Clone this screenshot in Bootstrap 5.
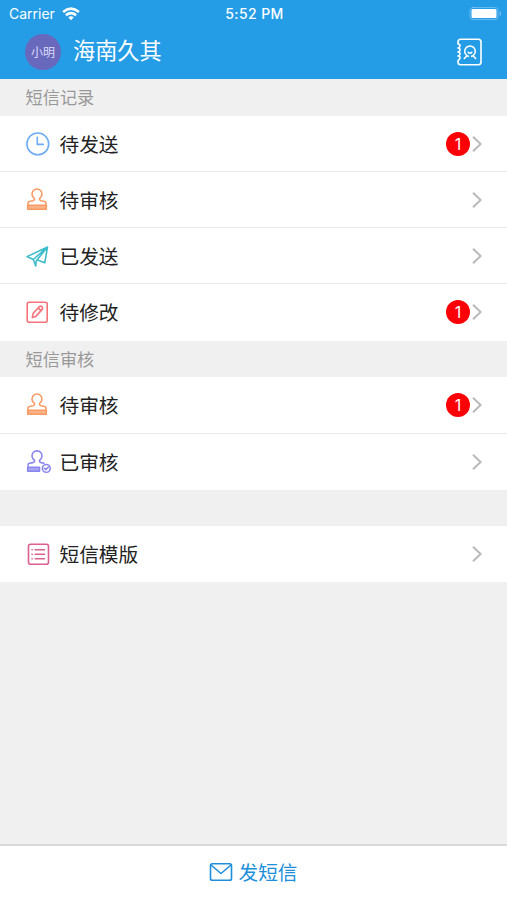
<!DOCTYPE html>
<html lang="zh-CN">
<head>
<meta charset="utf-8">
<meta name="viewport" content="width=device-width, initial-scale=1">
<title>短信</title>
<link href="https://cdn.jsdelivr.net/npm/bootstrap@5.3.0/dist/css/bootstrap.min.css" rel="stylesheet">
<style>
body{background:#f0f0f0;font-family:"Noto Sans CJK SC",sans-serif;color:#222;overflow:hidden}
svg{display:block;flex:none;fill:none;stroke:currentColor;stroke-width:1.6;stroke-linecap:round;stroke-linejoin:round}
.top-area{background:#249ce6;height:79px}
.status-line{height:28px;padding:0 5px 0 9px;font:14px/28px Inter,sans-serif}
.status-line>*{flex:1 1 0}
.carrier{letter-spacing:0}
.wifi{margin-left:7px;stroke-width:2.5;stroke-linecap:butt}
.clock-text{font-weight:500;font-size:14px;letter-spacing:.4px;margin-left:-2px}
.title-line{height:49px;padding:0 24px 1px 25px}
.avatar{width:36px;height:36px;background:#6868bd;font-size:12px;line-height:1;color:#dcdcf8}
.org{font-size:22.2px;line-height:30px;margin-left:12px;margin-top:-6px}
.section-label{height:37px;padding-left:25.5px;font-size:17.2px;line-height:36px;color:#999}
.section-label.section-short{line-height:35px}
.section-short{height:36px}
.menu-row{height:56px;padding:0 23px 0 24px;border:0;border-bottom:2px solid #eaeaea;border-radius:0!important;color:#222;background:#fff}
.menu-row.tall{height:57px;padding-bottom:1px}
.menu-row.last{border-bottom-color:#fff}
.menu-text{font-size:19.7px;line-height:28px;margin-left:7.5px}
.count{width:24px;height:24px;background:#fb0007;font:16px/24px Inter,sans-serif;color:#fff}
.chev{color:#b9b9b9;stroke-width:2;stroke-linecap:butt;stroke-linejoin:miter}
.c-clock{color:#6cabf6}.c-stamp{color:#f89a62}.c-plane{color:#3fbccb}.c-edit{color:#f5747c}.c-done{color:#8b86ef}.c-list{color:#dc5f91}
.send-bar{height:56px;padding:0 1px 2px 0;border-top:2px solid #d8d8d8;color:#208fdb;font-size:19.7px;line-height:28px}
</style>
<script src="https://cdn.jsdelivr.net/npm/bootstrap@5.3.0/dist/js/bootstrap.bundle.min.js"></script>
</head>
<body>
<svg width="0" height="0" class="position-absolute" aria-hidden="true">
  <symbol id="stamp" viewBox="0 0 28 28"><path d="M4 18.5V17.2Q4 15.8 5.5 15.5L9 14.8Q11.2 14 10.2 12.2A5 5 0 1 1 15.8 12.2Q14.8 14 17 14.8L20.5 15.5Q22 15.8 22 17.2V18.5"/><path d="M3.7 19.2H22.3V23.2H3.7Z" fill="currentColor" fill-opacity=".75"/></symbol>
  <symbol id="chevron" viewBox="0 0 12 18"><path d="M2 1.8L9.6 9L2 16.2"/></symbol>
</svg>
<div class="d-flex flex-column vh-100">
  <header class="top-area text-white">
    <div class="status-line d-flex align-items-center">
      <div class="carrier d-flex align-items-center">Carrier
        <svg class="wifi" width="18" height="14" viewBox="0 0 17 13"><path d="M1 4.6Q8.5-1.6 16 4.6M3.7 7.6Q8.5 3.6 13.3 7.6"/><path d="M8.5 12.3L5.9 9.6Q8.5 7.5 11.1 9.6Z" fill="currentColor" stroke="none"/></svg>
      </div>
      <div class="clock-text text-center">5:52 PM</div>
      <div class="d-flex justify-content-end"><svg width="33" height="14" viewBox="0 0 33 14"><rect x="1" y=".5" width="28" height="12" rx="3" stroke-width="1" opacity=".3"/><rect x="2.5" y="2" width="25" height="9" rx="1.5" fill="currentColor" stroke="none"/><path d="M31.2 5V8" opacity=".3"/></svg></div>
    </div>
    <div class="title-line d-flex align-items-center">
      <div class="avatar rounded-circle d-flex align-items-center justify-content-center">小明</div>
      <div class="org">海南久其</div>
      <svg class="ms-auto" width="28" height="30" viewBox="0 0 28 30"><path d="M3 7V5Q3 2.3 5.7 2.3H23.3Q26 2.3 26 5V25Q26 27.7 23.3 27.7H5.7Q3 27.7 3 25V23.5M3 7Q5.4 7.3 5 9T3 11Q5.4 11.3 5 13T3 15Q5.4 15.3 5 17T3 19Q5.4 19.3 5 21T3 23.5"/><path d="M12 18.7A5.3 5.3 0 1 1 18 18.7L20.7 21.5M12 18.7L9.3 21.5M18 18.7L16.6 19.3M12 18.7L13.4 19.3M13.2 15.4Q15 17 16.8 15.4"/></svg>
    </div>
  </header>
  <main class="flex-grow-1">
    <div class="section-label">短信记录</div>
    <div class="list-group list-group-flush">
      <a class="menu-row list-group-item d-flex align-items-center"><svg class="c-clock" width="28" height="28" viewBox="0 0 28 28"><circle cx="13.8" cy="13.9" r="10.9"/><path d="M13.3 7.3V14.4H19.3"/></svg><span class="menu-text">待发送</span><span class="count rounded-circle text-center ms-auto">1</span><svg class="chev" width="14" height="18"><use href="#chevron"/></svg></a>
      <a class="menu-row list-group-item d-flex align-items-center"><svg class="c-stamp" width="28" height="28"><use href="#stamp"/></svg><span class="menu-text">待审核</span><svg class="chev ms-auto" width="14" height="18"><use href="#chevron"/></svg></a>
      <a class="menu-row list-group-item d-flex align-items-center"><svg class="c-plane" width="28" height="28" viewBox="0 0 28 28"><path d="M23.5 5L3 14.6L9.3 17.5L23.5 5L20.8 20.8L14 18.2M9.3 17.5L11.8 24L12.2 19L23.5 5"/></svg><span class="menu-text">已发送</span><svg class="chev ms-auto" width="14" height="18"><use href="#chevron"/></svg></a>
      <a class="menu-row tall last list-group-item d-flex align-items-center"><svg class="c-edit" width="28" height="28" viewBox="0 0 28 28"><rect x="3.2" y="4.2" width="20" height="20" rx="2"/><path d="M8.3 19.6L9.2 15.2L15.4 8.6Q16.7 7.6 18 8.8T18 11.6L11.8 18.4ZM14.2 9.9L16.8 12.6"/></svg><span class="menu-text">待修改</span><span class="count rounded-circle text-center ms-auto">1</span><svg class="chev" width="14" height="18"><use href="#chevron"/></svg></a>
    </div>
    <div class="section-label section-short">短信审核</div>
    <div class="list-group list-group-flush">
      <a class="menu-row tall list-group-item d-flex align-items-center"><svg class="c-stamp" width="28" height="28"><use href="#stamp"/></svg><span class="menu-text">待审核</span><span class="count rounded-circle text-center ms-auto">1</span><svg class="chev" width="14" height="18"><use href="#chevron"/></svg></a>
      <a class="menu-row last list-group-item d-flex align-items-center"><svg class="c-done" width="28" height="28" viewBox="0 0 28 28"><path d="M4 18.2V17Q4 15.6 5.5 15.3L9 14.6Q11.2 13.8 10.2 12A5 5 0 1 1 15.8 12Q14.8 13.8 17 14.6L20 15.3"/><path d="M3.7 19.2H15.5V23.2H3.7Z" fill="currentColor" fill-opacity=".75"/><circle cx="22.3" cy="20.4" r="3.9"/><path d="M20.5 20.4L21.8 21.7L24.3 19"/></svg><span class="menu-text">已审核</span><svg class="chev ms-auto" width="14" height="18"><use href="#chevron"/></svg></a>
    </div>
    <div class="section-short"></div>
    <div class="list-group list-group-flush">
      <a class="menu-row list-group-item d-flex align-items-center"><svg class="c-list" width="28" height="28" viewBox="0 0 28 28"><rect x="4.5" y="4.3" width="20" height="20" rx="2"/><path d="M11.2 9.8H20.5M11.2 14.3H20.5M11.2 18.8H20.5M8 9.8H8.2M8 14.3H8.2M8 18.8H8.2"/></svg><span class="menu-text">短信模版</span><svg class="chev ms-auto" width="14" height="18"><use href="#chevron"/></svg></a>
    </div>
  </main>
  <footer class="send-bar bg-white d-flex align-items-center justify-content-center">
    <svg width="26" height="22" viewBox="0 0 26 22"><rect x="2.5" y="2.8" width="21" height="16.4" rx="1.8"/><path d="M3 4L13 12.5L23 4"/></svg><span class="ms-1">发短信</span>
  </footer>
</div>
</body>
</html>
